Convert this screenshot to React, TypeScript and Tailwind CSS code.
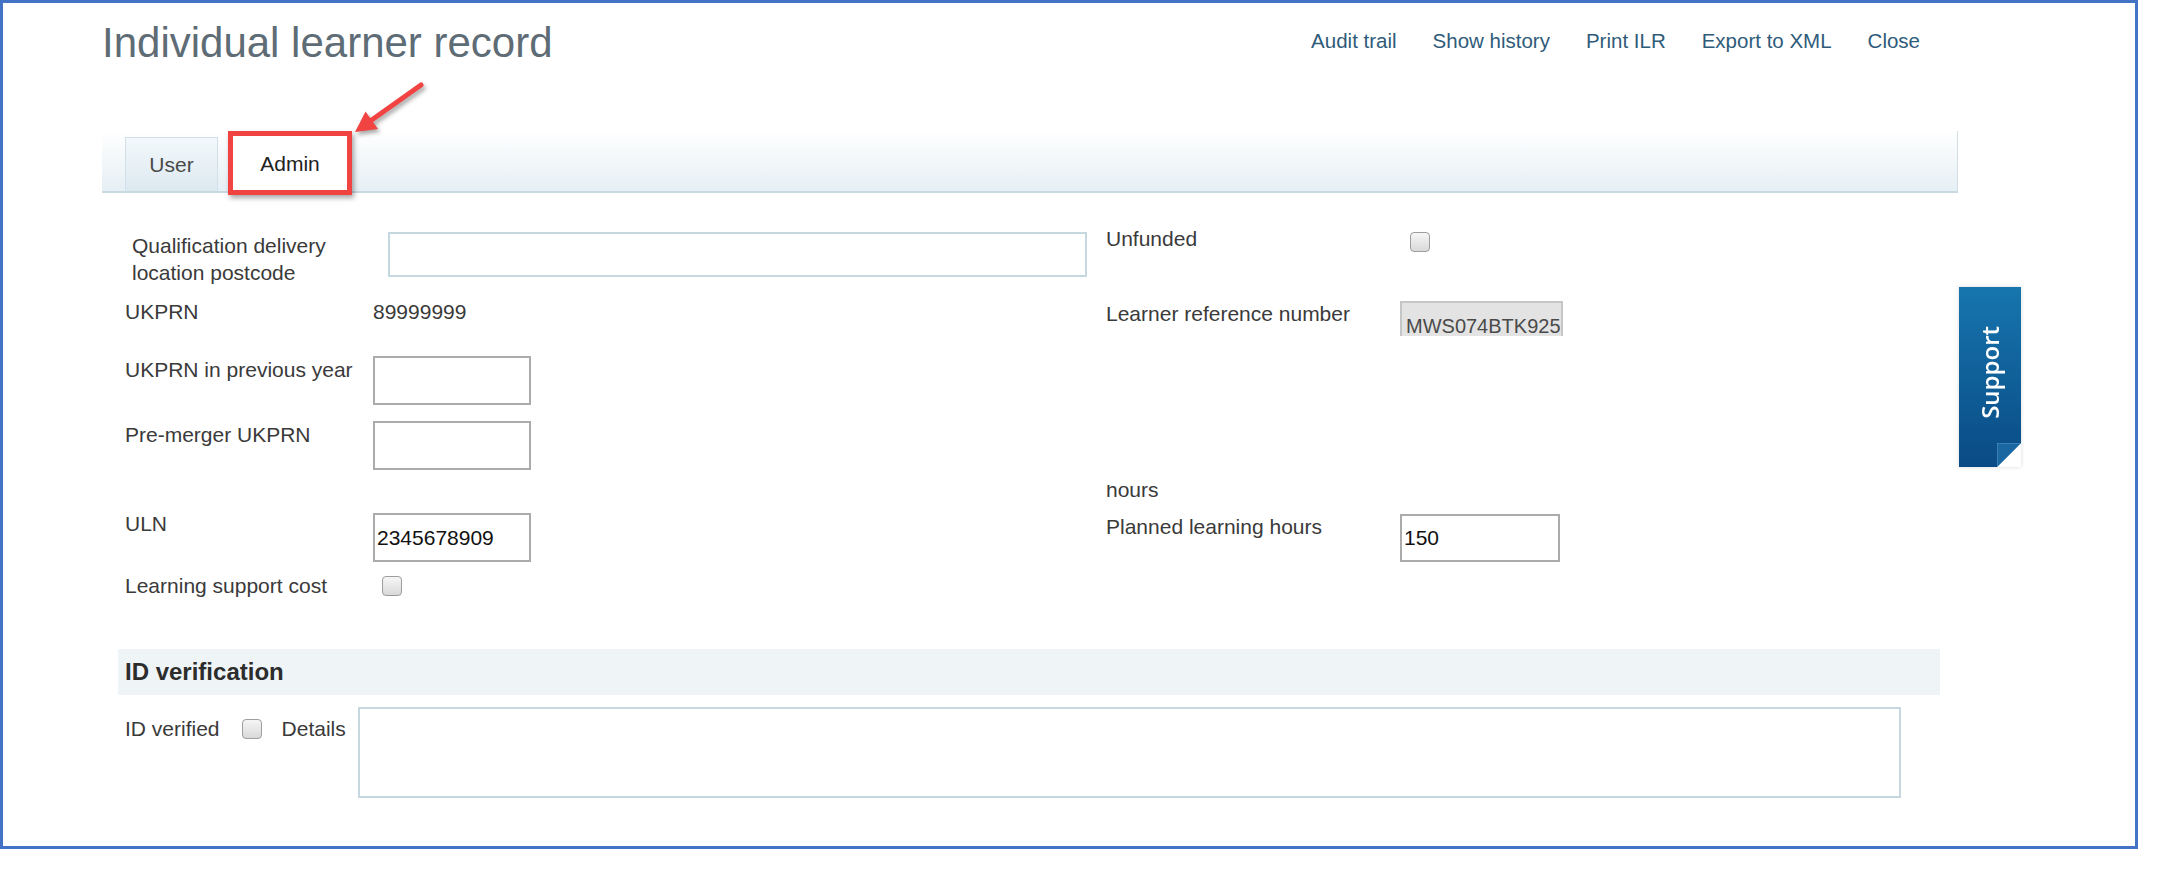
import React from 'react';

const Check = ({ className = '' }: { className?: string }) => (
  <span
    className={`block w-[20px] h-[20px] rounded-[4px] border border-[#9d9d9d] bg-linear-to-b from-[#f6f6f6] to-[#d9d9d9] ${className}`}
  />
);

const links = ['Audit trail', 'Show history', 'Print ILR', 'Export to XML', 'Close'];

const App = () => {
  return (
    <div className="relative w-[2157px] h-[887px] bg-white font-['Liberation_Sans',Arial,sans-serif] text-[21px] text-[#3a3a3a]">
      <div className="w-[2138px] h-[849px] border-[3px] border-[#4472c4]">
        {/* page header */}
        <div className="h-[80px] pl-[99px] flex items-center">
          <div className="w-[1818px] flex items-center justify-between">
            <h1 className="text-[42px] leading-none text-[#5e6c76]">Individual learner record</h1>
            <nav className="flex gap-[36px] text-[20.5px] text-[#2f5b7a] -mt-[4px]">
              {links.map((l) => (
                <a key={l} href="#" className="whitespace-nowrap">
                  {l}
                </a>
              ))}
            </nav>
          </div>
        </div>

        {/* tabs */}
        <div className="relative ml-[99px] mt-[48px] w-[1856px] h-[62px] flex items-end pl-[23px] bg-linear-to-b from-white to-[#e6eff4] border-b-2 border-r border-b-[#c9d9e2] border-r-[#d3dee4]">
          <div className="w-[93px] h-[54px] flex items-center justify-center border border-b-0 border-[#d0dfe8] bg-linear-to-b from-[#f2f8fb] to-[#dde9f0] text-[#4a4a4a]">
            User
          </div>
          <div className="ml-[10px] w-[124px] h-[54px] flex items-center justify-center bg-white text-[#222]">
            Admin
          </div>
          <div className="absolute left-[126px] top-0 w-[124px] h-[64px] border-[5px] border-[#f24343] shadow-[2px_3px_5px_rgba(0,0,0,0.35)]" />
        </div>

        {/* form */}
        <div className="flex pl-[122px]">
          <div className="w-[981px] flex flex-col">
            <div className="mt-[39px] flex h-[54px]">
              <div className="w-[263px] pl-[7px] leading-[27px]">
                Qualification delivery
                <br />
                location postcode
              </div>
              <div className="w-[699px] h-[45px] border-2 border-[#c5d7df]" />
            </div>
            <div className="mt-[12px] flex h-[27px] leading-[27px]">
              <div className="w-[248px]">UKPRN</div>
              <div>89999999</div>
            </div>
            <div className="mt-[31px] flex">
              <div className="w-[248px] leading-[27px]">UKPRN in previous year</div>
              <div className="w-[158px] h-[49px] border-2 border-[#ababab]" />
            </div>
            <div className="mt-[16px] flex">
              <div className="w-[248px] leading-[27px]">Pre-merger UKPRN</div>
              <div className="w-[158px] h-[49px] border-2 border-[#ababab]" />
            </div>
            <div className="mt-[43px] flex">
              <div className="w-[248px] leading-[27px] -mt-[3px]">ULN</div>
              <div className="w-[158px] h-[49px] border-2 border-[#ababab] flex items-center pl-[2px] text-[#111]">
                2345678909
              </div>
            </div>
            <div className="mt-[10px] flex items-center h-[27px]">
              <div className="w-[248px] leading-[27px]">Learning support cost</div>
              <Check className="ml-[9px]" />
            </div>
          </div>

          <div className="flex flex-col">
            <div className="mt-[32px] flex">
              <div className="w-[304px] leading-[27px]">Unfunded</div>
              <Check className="mt-[7px]" />
            </div>
            <div className="mt-[48px] flex">
              <div className="w-[294px] leading-[27px]">Learner reference number</div>
              <div className="mt-[1px] w-[163px] h-[35px] overflow-hidden bg-[#e3e3e3] border-2 border-b-0 border-[#c6c6c6] pl-[4px] pt-[10px] leading-[27px] text-[20px] text-[#4a4a4a]">
                MWS074BTK925
              </div>
            </div>
            <div className="mt-[149px] h-[20px] overflow-hidden">
              <div className="-mt-[9px] leading-[27px]">hours</div>
            </div>
            <div className="mt-[8px] flex">
              <div className="w-[294px] leading-[27px]">Planned learning hours</div>
              <div className="mt-[1px] w-[160px] h-[48px] border-2 border-[#ababab] flex items-center pl-[2px] text-[#111]">
                150
              </div>
            </div>
          </div>
        </div>

        {/* ID verification */}
        <div className="mt-[50px] ml-[115px] w-[1822px] h-[46px] bg-[#eff4f7] flex items-center pl-[7px] text-[24px] font-bold text-[#2c2c2c]">
          ID verification
        </div>
        <div className="mt-[12px] pl-[122px] flex">
          <div className="pt-[8px] leading-[27px]">ID verified</div>
          <Check className="ml-[22px] mt-[12px]" />
          <div className="ml-[20px] pt-[8px] leading-[27px]">Details</div>
          <div className="ml-[12px] w-[1543px] h-[91px] border-2 border-[#c5d7df]" />
        </div>
      </div>

      {/* callout arrow pointing at the Admin tab */}
      <svg
        className="absolute left-[340px] top-[70px] drop-shadow-[2px_3px_2px_rgba(0,0,0,0.35)]"
        width="100"
        height="80"
        viewBox="0 0 100 80"
      >
        <line x1="81" y1="15" x2="31" y2="50.5" stroke="#f24343" strokeWidth="5" strokeLinecap="round" />
        <polygon points="15,62 38,59 25.5,41.5" fill="#f24343" />
      </svg>

      {/* floating support tab */}
      <div className="absolute left-[1959px] top-[287px] w-[62px] h-[180px] bg-linear-to-b from-[#1775ae] to-[#0a4b85] flex items-center justify-center pb-[10px] shadow-[0_0_4px_rgba(0,0,0,0.15)]">
        <span className="[writing-mode:vertical-rl] rotate-180 font-['Open_Sans',sans-serif] font-semibold text-[24px] text-white">
          Support
        </span>
        <svg className="absolute right-0 bottom-0" width="24" height="24" viewBox="0 0 24 24">
          <polygon points="0,24 24,0 24,24" fill="#ffffff" />
          <polygon points="0,0 24,0 0,24" fill="#1b67a2" stroke="#5b97c6" strokeWidth="1" />
        </svg>
      </div>
    </div>
  );
};

export default App;
